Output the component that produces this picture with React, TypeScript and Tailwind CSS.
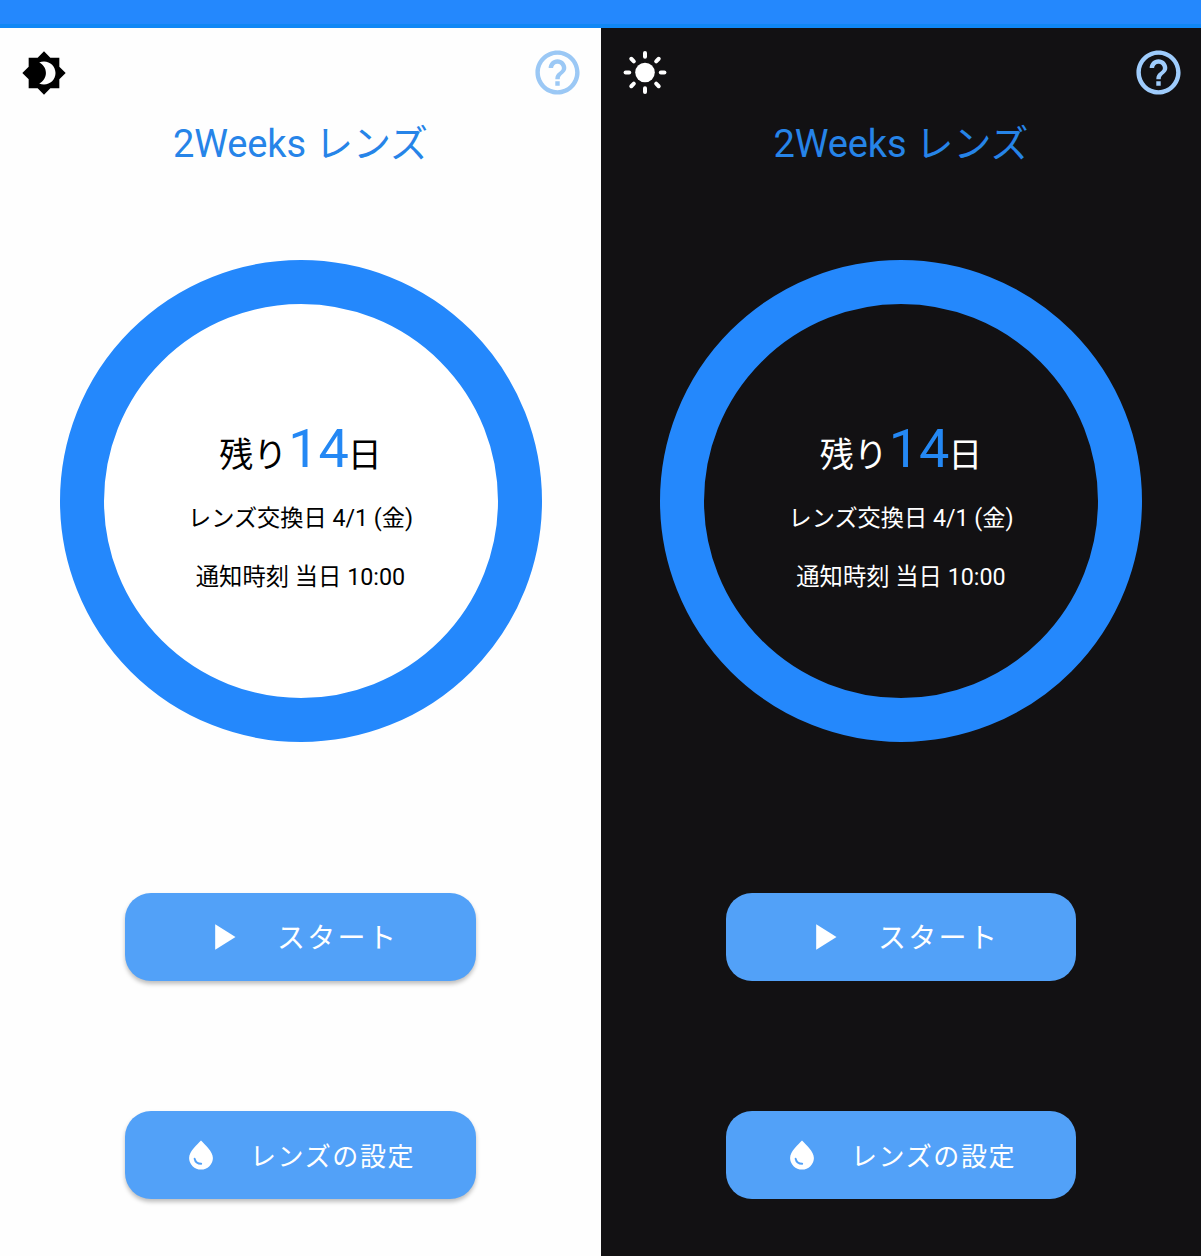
import React from 'react';
import { MdBrightness4, MdHelpOutline } from 'react-icons/md';

function Sun() {
  return (
    <svg viewBox="-22 -21.5 44 44" className="size-11" fill="currentColor" stroke="currentColor">
      <circle r="9.8" stroke="none" />
      {[0, 45, 90, 135, 180, 225, 270, 315].map((a) => (
        <line key={a} x1="0" y1="-15.8" x2="0" y2="-19.4" strokeWidth="4" strokeLinecap="round" transform={`rotate(${a})`} />
      ))}
    </svg>
  );
}

function Drop() {
  return (
    <svg viewBox="0 0 24 30" className="h-[30px] w-6" fill="none">
      <path d="M12 .4C8.4 4.200.1 11.200.1 18.100A11.900 11.500 0 0 0 23.900 18.100C23.900 11.200 15.600 4.200 12 .4Z" fill="#fff" />
      <path d="M5.600 18.700A6.900 6.300 0 0 0 12.200 23.800" stroke="#52a1f8" strokeWidth="1.900" strokeLinecap="round" />
    </svg>
  );
}

function Play() {
  return (
    <svg viewBox="0 0 21 26" className="h-[26px] w-[21px]" fill="currentColor">
      <path d="M.2.2V25.800L20.500 13Z" />
    </svg>
  );
}

function Phone({ dark }: { dark?: boolean }) {
  const button = dark ? 'w-[350px]' : 'w-[351px] shadow-[0_3px_4px_rgba(0,0,0,0.25)]';
  return (
    <section className={`flex h-[1256px] shrink-0 flex-col items-center ${dark ? 'w-[600px] bg-[#121113] text-white' : 'w-[601px] bg-[#fefefe] text-black'}`}>
      <div className="h-7 w-full shrink-0 border-b-4 border-[#1087f5] bg-[#2488fd]" />
      <header className={`flex h-[89px] w-full shrink-0 items-center justify-between ${dark ? 'pr-[16.5px] pl-[22px]' : 'pr-[17.5px] pl-[21px]'}`}>
        {dark ? <Sun /> : <MdBrightness4 className="size-[46px]" />}
        <MdHelpOutline className={`size-[53px] ${dark ? 'text-[#9fccfc]' : 'text-[#9bc8f5]'}`} />
      </header>
      <h1 className="h-[52px] shrink-0 pt-px text-[38px] leading-[52px] tracking-[-0.15px] whitespace-nowrap text-[#2684e8]">2Weeks レンズ</h1>
      <div className={`mt-[91px] flex size-[482px] shrink-0 flex-col items-center rounded-full border-[44px] border-[#2488fc] ${dark ? '' : 'bg-white'}`}>
        <p className="mt-[110px] h-[70px] text-[34px] leading-[70px] whitespace-nowrap">
          残り<span className="relative left-px text-[54px] text-[#2488f4]">14</span>日
        </p>
        <p className="mt-4 h-9 text-[23.2px] leading-9 whitespace-nowrap">レンズ交換日 4/1 (金)</p>
        <p className="mt-[23px] h-9 text-[23.3px] leading-9 whitespace-nowrap">通知時刻 当日 10:00</p>
      </div>
      <button className={`mt-[151px] flex h-[88px] shrink-0 items-center rounded-[26px] bg-[#52a1f8] pl-[90px] text-[28px] text-white ${button}`}>
        <Play />
        <span className="ml-[41px] pt-1 tracking-[2.3px]">スタート</span>
      </button>
      <button className={`mt-[130px] flex h-[88px] shrink-0 items-center rounded-[26px] bg-[#52a1f8] pl-[64px] text-[26px] text-white ${button}`}>
        <Drop />
        <span className="ml-[37px] pt-1 tracking-[1.6px]">レンズの設定</span>
      </button>
    </section>
  );
}

export default function App() {
  return (
    <main className="flex h-[1256px] w-[1201px] overflow-hidden font-[Roboto,'Noto_Sans_CJK_JP',sans-serif]">
      <Phone />
      <Phone dark />
    </main>
  );
}
